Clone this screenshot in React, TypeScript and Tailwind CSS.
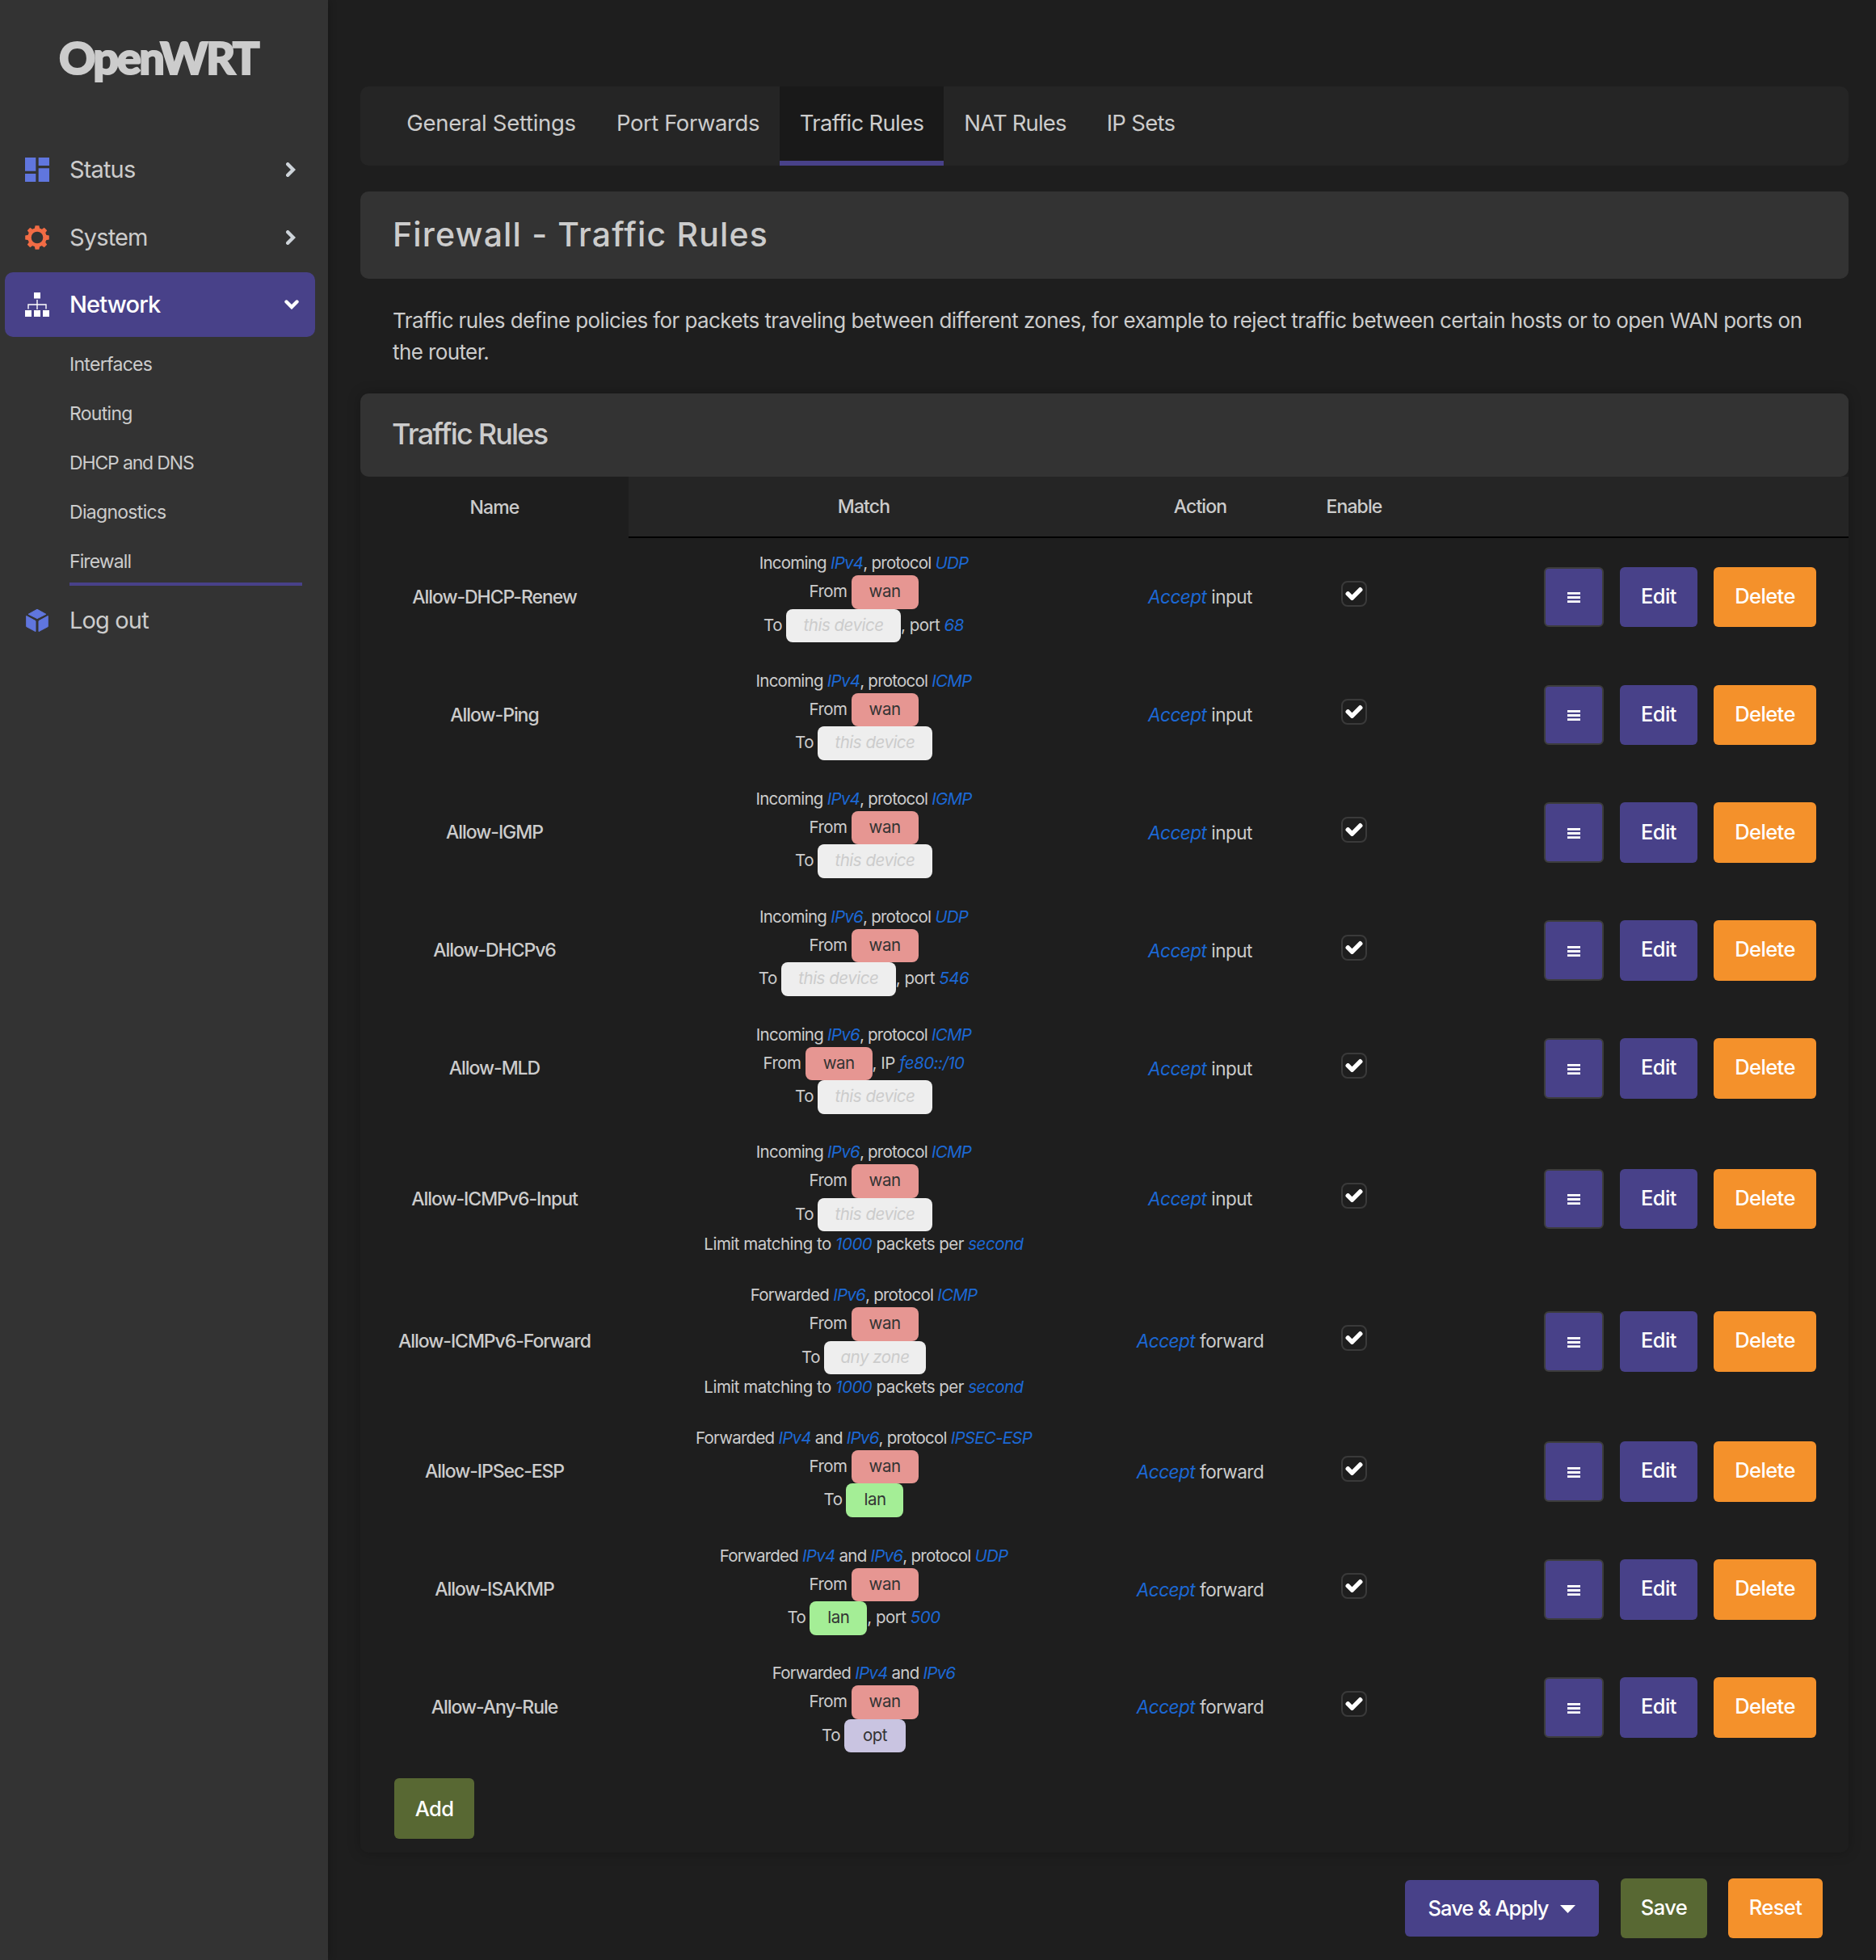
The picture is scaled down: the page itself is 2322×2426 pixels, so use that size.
import React from "react";

type Part = { t: string; em?: boolean };
type Zone = "wan" | "lan" | "opt" | "this device" | "any zone";
type Rule = {
  name: string;
  head: Part[];
  fromTail?: Part[];
  to: Zone;
  toTail?: Part[];
  limit?: boolean;
  action: string;
};

const inc = (v: string, p: string): Part[] => [
  { t: "Incoming " }, { t: v, em: true }, { t: ", protocol " }, { t: p, em: true },
];

const rules: Rule[] = [
  { name: "Allow-DHCP-Renew", head: inc("IPv4", "UDP"), to: "this device", toTail: [{ t: ", port " }, { t: "68", em: true }], action: "input" },
  { name: "Allow-Ping", head: inc("IPv4", "ICMP"), to: "this device", action: "input" },
  { name: "Allow-IGMP", head: inc("IPv4", "IGMP"), to: "this device", action: "input" },
  { name: "Allow-DHCPv6", head: inc("IPv6", "UDP"), to: "this device", toTail: [{ t: ", port " }, { t: "546", em: true }], action: "input" },
  { name: "Allow-MLD", head: inc("IPv6", "ICMP"), fromTail: [{ t: ", IP " }, { t: "fe80::/10", em: true }], to: "this device", action: "input" },
  { name: "Allow-ICMPv6-Input", head: inc("IPv6", "ICMP"), to: "this device", limit: true, action: "input" },
  { name: "Allow-ICMPv6-Forward", head: [{ t: "Forwarded " }, { t: "IPv6", em: true }, { t: ", protocol " }, { t: "ICMP", em: true }], to: "any zone", limit: true, action: "forward" },
  { name: "Allow-IPSec-ESP", head: [{ t: "Forwarded " }, { t: "IPv4", em: true }, { t: " and " }, { t: "IPv6", em: true }, { t: ", protocol " }, { t: "IPSEC-ESP", em: true }], to: "lan", action: "forward" },
  { name: "Allow-ISAKMP", head: [{ t: "Forwarded " }, { t: "IPv4", em: true }, { t: " and " }, { t: "IPv6", em: true }, { t: ", protocol " }, { t: "UDP", em: true }], to: "lan", toTail: [{ t: ", port " }, { t: "500", em: true }], action: "forward" },
  { name: "Allow-Any-Rule", head: [{ t: "Forwarded " }, { t: "IPv4", em: true }, { t: " and " }, { t: "IPv6", em: true }], to: "opt", action: "forward" },
];

const limitParts: Part[] = [
  { t: "Limit matching to " }, { t: "1000", em: true }, { t: " packets per " }, { t: "second", em: true },
];

const zoneStyle: Record<Zone, string> = {
  wan: "w-[83px] bg-[#e69692] text-[#333]",
  lan: "w-[71px] bg-[#a4ee96] text-[#333]",
  opt: "w-[76px] bg-[#c9c4e1] text-[#333]",
  "this device": "w-[142px] bg-[#eee] text-[#ccc] italic",
  "any zone": "w-[126px] bg-[#eee] text-[#ccc] italic",
};

function Parts({ parts }: { parts: Part[] }) {
  return (
    <span className="whitespace-pre">
      {parts.map((p, i) =>
        p.em ? <em key={i} className="text-[#1c68d4]">{p.t}</em> : <span key={i}>{p.t}</span>
      )}
    </span>
  );
}

function ZoneLine({ label, zone, tail }: { label: string; zone: Zone; tail?: Part[] }) {
  return (
    <div className="flex h-[41.5px] items-stretch justify-center leading-[40px]">
      <span className="mr-[5px]">{label}</span>
      <span className={"rounded-lg text-center whitespace-nowrap " + zoneStyle[zone]}>{zone}</span>
      {tail && <Parts parts={tail} />}
    </div>
  );
}

function RuleRow({ rule }: { rule: Rule }) {
  return (
    <div className={"flex items-center " + (rule.limit ? "h-[176.6px]" : "h-[145.9px]")}>
      <div className="w-[332px] text-center text-[23px] font-medium tracking-[-1.05px]">{rule.name}</div>
      <div className="w-[582px] self-start pt-[17px] text-center text-[20.5px] tracking-[-0.5px]">
        <div className="h-[29px] leading-[27px] tracking-[-0.75px]"><Parts parts={rule.head} /></div>
        <ZoneLine label="From" zone="wan" tail={rule.fromTail} />
        <ZoneLine label="To" zone={rule.to} tail={rule.toTail} />
        {rule.limit && <div className="leading-[31px]"><Parts parts={limitParts} /></div>}
      </div>
      <div className="w-[251px] text-center text-[22.5px] tracking-[-0.5px]">
        <em className="text-[#1c68d4]">Accept</em> {rule.action}
      </div>
      <div className="flex w-[130px] justify-center pb-2">
        <span className="flex size-8 items-center justify-center rounded-lg border-2 border-[#3a3a3a]">
          <svg viewBox="0 0 512 512" className="size-5 overflow-visible fill-white stroke-white" strokeWidth="34">
            <path d="M173.898 439.404l-166.4-166.4c-9.997-9.997-9.997-26.206 0-36.204l36.203-36.204c9.997-9.998 26.207-9.998 36.204 0L192 312.69 432.095 72.596c9.997-9.997 26.207-9.997 36.204 0l36.203 36.204c9.997 9.997 9.997 26.206 0 36.204l-294.4 294.401c-9.998 9.997-26.207 9.997-36.204-.001z" />
          </svg>
        </span>
      </div>
      <div className="flex flex-1 justify-end gap-5 pr-10 text-[25.5px] font-medium tracking-[-0.6px] text-white">
        <button className="flex h-[74.5px] w-[74px] items-center justify-center rounded-md border-2 border-[#3d3d3d] bg-[#484189]">
          <svg viewBox="0 0 16 13" className="mt-0.5 h-[13px] w-4 fill-white">
            <path d="M0 0h16v2.8H0zM0 5.1h16v2.8H0zM0 10.2h16V13H0z" />
          </svg>
        </button>
        <button className="h-[74.5px] w-24 rounded-md bg-[#484189] pb-0.5">Edit</button>
        <button className="h-[74.5px] w-[127px] rounded-md bg-[#f4912b] pb-0.5">Delete</button>
      </div>
    </div>
  );
}

function DashboardIcon() {
  return (
    <svg viewBox="3 3 18 18" className="size-[30px] fill-[#6076de]">
      <path d="M3 13h8V3H3v10zm0 8h8v-6H3v6zm10 0h8V11h-8v10zm0-18v6h8V3h-8z" />
    </svg>
  );
}

function GearIcon() {
  return (
    <svg viewBox="-15 -15 30 30" className="size-[30px]">
      <circle r="9.5" fill="none" stroke="#f26c45" strokeWidth="4.4" />
      {[0, 45, 90, 135, 180, 225, 270, 315].map((a) => (
        <path key={a} d="M-3.2-11L-2.4-14.8H2.4L3.2-11z" fill="#f26c45" transform={`rotate(${a})`} />
      ))}
    </svg>
  );
}

function SitemapIcon() {
  return (
    <svg viewBox="0 0 30 30" className="size-[30px]">
      <path d="M11 0h8v7.5h-8zM0 22h8v8H0zM11 22h8v8h-8zM22 22h8v8h-8z" fill="#fff" />
      <path d="M15 9V21M4 20.5V15h22v5.5" fill="none" stroke="#fff" strokeWidth="1.4" />
    </svg>
  );
}

function CubeIcon() {
  return (
    <svg viewBox="0 0 30 30" className="size-[30px] fill-[#6076de] stroke-[#6076de] stroke-1" strokeLinejoin="round">
      <path d="M15 1.2L25.8 7.2 15 12.6 4.2 7.2zM1.7 9.4L13 15.6V28.6L1.7 22.6zM28.3 9.4L17 15.6V28.6L28.3 22.6z" />
    </svg>
  );
}

function Chevron({ down }: { down?: boolean }) {
  return down ? (
    <svg viewBox="0 0 18 12" className="h-3 w-[18px]">
      <path d="M2.5 2.5L9 9L15.5 2.5" fill="none" stroke="#fff" strokeWidth="4.4" strokeLinecap="round" />
    </svg>
  ) : (
    <svg viewBox="0 0 12 18" className="mr-1 h-[18px] w-3">
      <path d="M2.2 2.2L9 9L2.2 15.8" fill="none" stroke="#ced4da" strokeWidth="4.4" strokeLinecap="round" />
    </svg>
  );
}

function NavItem({ icon, label, arrow, active }: { icon: React.ReactNode; label: string; arrow?: React.ReactNode; active?: boolean }) {
  return (
    <div className={"ml-1.5 flex h-20 w-96 items-center rounded-[10px] pr-5 pl-[25px] text-[29px] tracking-[-0.85px] " + (active ? "bg-[#484189] font-medium text-white" : "")}>
      {icon}
      <span className="ml-[25px] flex-1">{label}</span>
      {arrow}
    </div>
  );
}

const tabs = [
  { t: "General Settings", c: "w-[260px] tracking-[-0.3px]" },
  { t: "Port Forwards", c: "w-[227px] tracking-[-0.45px]" },
  { t: "Traffic Rules", c: "w-[203px] bg-[#191919] border-b-6 border-[#484189] tracking-[-0.7px]" },
  { t: "NAT Rules", c: "w-[177px] tracking-[-0.85px]" },
  { t: "IP Sets", c: "w-[134px] tracking-[-0.7px]" },
];

export default function App() {
  return (
    <div className="flex h-[2426px] w-[2322px] overflow-hidden bg-[#1e1e1e] font-['Inter',sans-serif] text-[#ccc]">
      <aside className="w-[406px] shrink-0 bg-[#333] shadow-[0_0_10px_rgba(0,0,0,0.3)]">
        <div className="flex h-[170px] pt-[33px] pl-[73px] font-['Lato',sans-serif] text-[56px] leading-[76px] font-black tracking-[-2.6px] [-webkit-text-stroke:2px_#ccc]">
          OpenWRT
        </div>
        <nav>
          <div className="flex flex-col gap-[3.5px]">
            <NavItem icon={<DashboardIcon />} label="Status" arrow={<Chevron />} />
            <NavItem icon={<GearIcon />} label="System" arrow={<Chevron />} />
            <NavItem icon={<SitemapIcon />} label="Network" arrow={<Chevron down />} active />
          </div>
          <ul className="mt-[3px] mb-[3px] ml-[86px] w-72 text-[23px] leading-[62px] tracking-[-0.7px]">
            <li className="h-[61px]">Interfaces</li>
            <li className="h-[61px]">Routing</li>
            <li className="h-[61px] tracking-[-1.15px]">DHCP and DNS</li>
            <li className="h-[61px]">Diagnostics</li>
            <li className="h-[61px] border-b-4 border-[#484189] tracking-[-0.9px]">Firewall</li>
          </ul>
          <NavItem icon={<CubeIcon />} label="Log out" />
        </nav>
      </aside>

      <main className="flex-1 pt-[107px] pr-[34px] pl-10">
        <div className="flex h-[98px] overflow-hidden rounded-[10px] bg-[#252525] pl-8 text-[27.5px]">
          {tabs.map((tab) => (
            <div key={tab.t} className={"pt-0.5 text-center leading-[86px] whitespace-nowrap " + tab.c}>{tab.t}</div>
          ))}
        </div>

        <h2 className="mt-8 h-[108px] rounded-[10px] bg-[#333] pl-10 text-[41px] leading-[106px] font-medium tracking-[1.15px]">
          Firewall - Traffic Rules
        </h2>
        <p className="mt-[32px] h-[110px] pl-10 text-[26px] leading-[39px] tracking-[-0.6px]">
          Traffic rules define policies for packets traveling between different zones, for example to reject traffic between certain hosts or to open WAN ports on<br />
          the router.
        </p>

        <section className="h-[1806px] rounded-[10px] shadow-[0_0_16px_rgba(0,0,0,0.25)]">
          <h3 className="h-[103px] rounded-[10px] bg-[#333] pl-[39px] text-[36px] leading-[101px] font-medium tracking-[-1.8px]">Traffic Rules</h3>
          <div className="flex h-[76px] text-center text-[23px] leading-[74px] font-medium tracking-[-0.9px]">
            <div className="w-[332px] pt-px">Name</div>
            <div className="flex flex-1 border-b-2 border-black bg-[#252525]">
              <div className="w-[582px]">Match</div>
              <div className="w-[251px]">Action</div>
              <div className="w-[130px]">Enable</div>
            </div>
          </div>
          {rules.map((r) => <RuleRow key={r.name} rule={r} />)}
          <button className="mt-[15px] ml-[42px] h-[75px] w-[99px] rounded-md bg-[#586833] text-[25.5px] font-medium tracking-[-0.6px] text-white">Add</button>
        </section>

        <div className="mt-8 flex items-center justify-end pr-8 text-[25.5px] font-medium tracking-[-0.6px] text-white">
          <button className="flex h-[70px] w-60 items-center justify-center gap-[15px] rounded-md bg-[#484189] tracking-[-1px]">
            <span>Save &amp; Apply</span>
            <svg viewBox="0 0 19 10" className="mt-0.5 h-2.5 w-[19px] fill-white"><path d="M0 0h19L9.5 10z" /></svg>
          </button>
          <button className="ml-[27px] h-[74px] w-[107px] rounded-md bg-[#586833] pb-0.5">Save</button>
          <button className="ml-[26px] h-[74px] w-[117px] rounded-md bg-[#f4912b] pb-0.5">Reset</button>
        </div>
      </main>
    </div>
  );
}
